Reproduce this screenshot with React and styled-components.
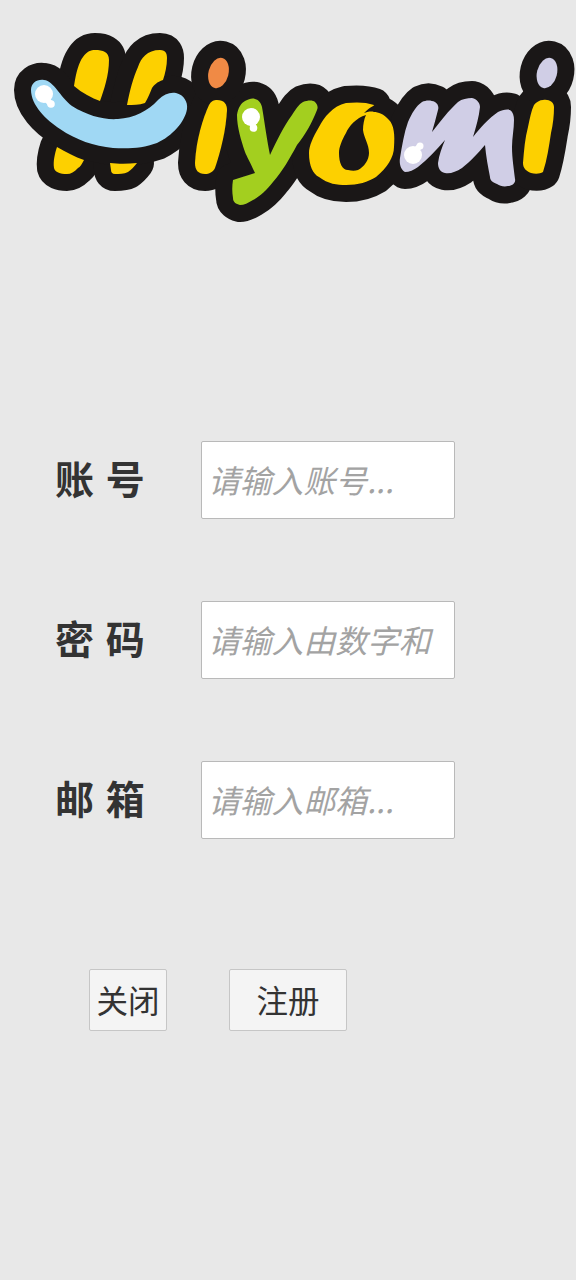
import React from "react";
import styled, { createGlobalStyle } from "styled-components";

const Global = createGlobalStyle`
  html, body { margin: 0; padding: 0; background: #e8e8e8; }
  body { font-family: "Noto Sans CJK SC", "Noto Sans", sans-serif; }
`;

const Page = styled.div`
  width: 576px;
  height: 1280px;
  overflow: hidden;
  background: #e8e8e8;
`;
const LogoSvg = styled.svg`
  display: block;
  width: 576px;
  height: 240px;
`;
const Form = styled.form`
  display: flex;
  flex-direction: column;
  gap: 82px;
  padding: 201px 0 0 55px;
`;
const Row = styled.div`
  display: flex;
  align-items: center;
`;
const Label = styled.label`
  width: 146px;
  flex: none;
  padding-bottom: 7px;
  font-size: 39px;
  font-weight: 700;
  color: #333;
  white-space: pre;
  word-spacing: 3px;
`;
const Input = styled.input`
  box-sizing: border-box;
  width: 254px;
  height: 78px;
  padding: 0 6px 3px;
  background: #fff;
  border: 1px solid #b9b9b9;
  border-radius: 2px;
  font-family: inherit;
  font-size: 31.8px;
  outline: none;
  &::placeholder {
    color: #a3a3a3;
    font-style: italic;
    opacity: 1;
  }
`;
const Actions = styled.div`
  display: flex;
  gap: 62px;
  padding: 130px 0 0 89px;
`;
const Button = styled.button`
  box-sizing: border-box;
  width: ${(p) => p.$w}px;
  height: 62px;
  padding: 0 0 2px;
  background: #f4f4f4;
  border: 1px solid #c6c6c6;
  border-radius: 2px;
  color: #333;
  font-family: inherit;
  font-size: 31.5px;
`;

const shapes = {
  h1: "M74 86C76 72 79 62 83 57C87 51 91 50 95 50C103 50 109 52 109 60C109 75 104 90 100 101C92 98 82 93 74 86Z",
  h2: "M127 105C130 90 133 78 138 67C141 58 147 50 160 50C166 50 167 54 167 58C167 66 165 74 163 80C157 82 154 85 152 88C150 93 148 98 145 103C139 105 133 105 127 105Z",
  h3: "M57 147C66 152 75 157 84 160C82 164 80 167 78 168C74 172 71 174 67 174C60 174 55 172 54 168C53 161 55 153 57 147Z",
  h4: "M110 163C118 164 128 164 137 163C134 167 131 170 128 172C124 174 119 174 115 174C112 174 111 172 111 170Z",
  blue: "M31 90C31 83 37 79 44 80C54 81 60 97 72 106C88 116 104 120 118 119C134 118 148 111 158 100C164 94 170 92 176 93C184 95 188 102 187 109C185 122 172 136 157 143C143 148 130 149 113 148C94 146 76 140 60 129C46 120 31 105 31 90Z",
  iStem: "M217 100C224 100 227 104 227 110C226 130 221 150 215 168C213 172 209 174 205 174C198 174 195 170 195 163C196 140 203 118 209 105C211 101 214 100 217 100Z",
  y: "M237 115C238 108 241 103 245 101C249 99 252 98 255 99C259 100 261 103 262 107C265 125 267 140 270 155C277 140 284 126 292 115C296 109 299 104 303 102C308 100 313 100 315 102C318 105 318 108 317 110C312 123 305 135 297 145C290 158 282 172 273 182C266 191 260 196 253 200C248 203 244 205 240 205C236 204 233 202 233 198C232 192 232 186 233 180C240 178 248 175 255 173C250 162 247 157 245 152C241 140 237 127 237 115Z",
  o: "M374 105C366 102 356 102 346 103C333 106 324 117 319 127C313 137 309 146 309 153C309 166 313 174 319 177C328 184 337 185 346 185C358 185 368 182 376 177C387 168 394 157 394 147C395 135 394 125 389 120C384 114 378 112 374 112C371 111 367 112 364 113C372 105 375 106 374 105ZM366 115C356 118 349 126 346 133C342 140 339 147 339 153C339 163 342 170 348 170C352 171 355 171 358 170C364 167 369 160 369 153C369 144 364 138 363 130C363 125 364 119 366 115Z",
  m: "M400 158C402 146 404 133 408 122C412 113 416 106 422 102C426 100 431 100 435 102C438 104 439 107 438 110C436 118 434 125 432 132C440 122 449 110 458 102C462 99 467 98 472 98C477 99 480 103 480 107C479 117 476 127 473 137C481 127 489 118 498 112C502 110 507 109 510 110C513 112 514 116 514 120C514 129 512 138 512 147C512 158 514 170 515 179C516 183 512 186 508 186C504 187 500 186 497 184C492 182 490 180 490 177C488 167 486 156 485 145C478 153 470 162 462 168C456 172 450 174 445 173C440 172 438 168 438 163C439 155 442 147 445 140C437 149 428 159 418 167C414 170 409 172 405 172C401 170 399 164 400 158Z",
  i2Stem: "M543 100C549 99 554 102 554 107C554 116 553 124 551 133C549 146 547 160 543 172C540 174 535 174 531 173C526 171 523 168 523 163C524 150 525 138 528 127C530 118 531 111 534 105C536 102 540 100 543 100Z",
};
const colors = {
  h1: "#fdd000", h2: "#fdd000", h3: "#fdd000", h4: "#fdd000",
  blue: "#a0d8f4", iStem: "#fdd000", y: "#a3cf1f", o: "#fdd000", m: "#d0cee6", i2Stem: "#fdd000",
};

function Logo() {
  const ink = "#1a1717";
  return (
    <LogoSvg viewBox="0 0 576 240" aria-label="Hiyomi">
      <g stroke={ink} strokeWidth="34" strokeLinejoin="round" fill={ink}>
        {Object.keys(shapes).map((k) => <path key={k} d={shapes[k]} />)}
        <ellipse cx="218.5" cy="73" rx="10" ry="15.5" transform="rotate(14 218.5 73)" />
        <ellipse cx="547" cy="73" rx="10" ry="15.5" transform="rotate(14 547 73)" />
      </g>
      {Object.keys(shapes).map((k) => (
        <path key={k} d={shapes[k]} fill={colors[k]} fillRule="evenodd" />
      ))}
      <ellipse cx="218.5" cy="73" rx="10" ry="15.5" transform="rotate(14 218.5 73)" fill="#f08a45" />
      <ellipse cx="547" cy="73" rx="10" ry="15.5" transform="rotate(14 547 73)" fill="#d0cee6" />
      <g fill="#fff">
        <circle cx="44" cy="94" r="9" />
        <path d="M46 99L51 104" stroke="#fff" strokeWidth="6" />
        <circle cx="51" cy="104" r="3.8" />
        <circle cx="251" cy="117" r="9" />
        <path d="M252 122L253.5 128" stroke="#fff" strokeWidth="6" />
        <circle cx="253.5" cy="128" r="3.8" />
        <circle cx="413" cy="155" r="9" />
        <path d="M415 151L420 146" stroke="#fff" strokeWidth="6" />
        <circle cx="420" cy="146" r="3.5" />
      </g>
    </LogoSvg>
  );
}

const fields = [
  ["账 号", "text", "请输入账号..."],
  ["密 码", "password", "请输入由数字和"],
  ["邮 箱", "email", "请输入邮箱..."],
];

export default function App() {
  return (
    <Page>
      <Global />
      <Logo />
      <Form onSubmit={(e) => e.preventDefault()}>
        {fields.map(([label, type, ph]) => (
          <Row key={label}>
            <Label>{label}</Label>
            <Input type={type} placeholder={ph} />
          </Row>
        ))}
      </Form>
      <Actions>
        <Button $w={78}>关闭</Button>
        <Button $w={118}>注册</Button>
      </Actions>
    </Page>
  );
}
